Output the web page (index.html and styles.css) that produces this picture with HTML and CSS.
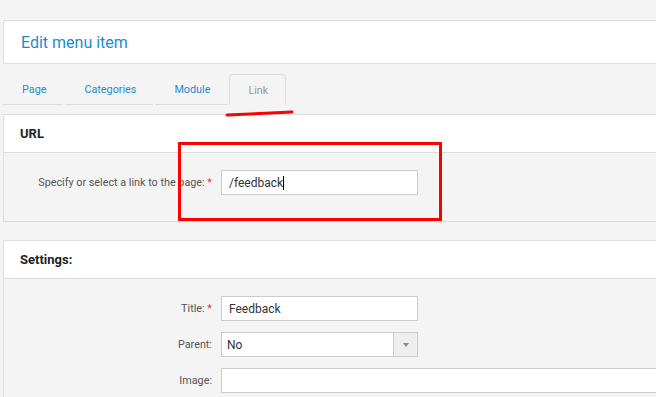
FILE: index.html
```html
<!DOCTYPE html>
<html lang="en">
<head>
    <meta charset="UTF-8">
    <title>Edit menu item</title>
    <link rel="stylesheet" href="styles.css">
</head>
<body>
    <div class="page">
        <div class="title-box">
            <h1>Edit menu item</h1>
        </div>

        <ul class="tabs">
            <li class="tab">Page</li>
            <li class="tab">Categories</li>
            <li class="tab">Module</li>
            <li class="tab tab-active">Link</li>
        </ul>

        <div class="panel">
            <div class="panel-head">URL</div>
            <div class="panel-body">
                <div class="field">
                    <label class="field-label">Specify or select a link to the page: <span class="req">*</span></label>
                    <div class="input">/feedback<span class="caret"></span></div>
                </div>
            </div>
        </div>

        <div class="panel">
            <div class="panel-head">Settings:</div>
            <div class="panel-body">
                <div class="field">
                    <label class="field-label">Title: <span class="req">*</span></label>
                    <div class="input">Feedback</div>
                </div>
                <div class="field">
                    <label class="field-label">Parent:</label>
                    <div class="input select">
                        <span class="select-value">No</span>
                        <span class="select-arrow"></span>
                    </div>
                </div>
                <div class="field">
                    <label class="field-label">Image:</label>
                    <div class="input input-wide"></div>
                </div>
            </div>
        </div>
    </div>

    <!-- red marks drawn over the screenshot -->
    <svg class="marks" width="656" height="397" viewBox="0 0 656 397">
        <path d="M227 115 L292 112" stroke="#ff0000" stroke-width="3" fill="none" stroke-linecap="round"/>
        <rect x="179.5" y="143.5" width="261" height="76" stroke="#ff0000" stroke-width="3" fill="none"/>
    </svg>
</body>
</html>
```

FILE: styles.css
```css
* {
    margin: 0;
    padding: 0;
    box-sizing: border-box;
}

html,
body {
    height: 100%;
}

body {
    background-color: #f4f4f4;
    font-family: Roboto, "Liberation Sans", sans-serif;
    color: #444;
    overflow: hidden;
    position: relative;
}

.page {
    padding: 20px 0 0 3px;
    margin-right: -40px;
}

.title-box {
    background-color: #fff;
    border: 1px solid #ddd;
    height: 44px;
    display: flex;
    align-items: center;
    padding-left: 17px;
}

.title-box h1 {
    font-size: 16px;
    font-weight: 400;
    color: #1a8dcd;
}

.tabs {
    list-style: none;
    display: flex;
    margin-top: 10px;
    height: 31px;
}

.tab {
    height: 31px;
    padding: 0 17px 0 19px;
    margin-right: 2px;
    display: flex;
    align-items: center;
    font-size: 10.8px;
    color: #1a8dcd;
    border-bottom: 1px solid #ddd;
}

.tab-active {
    color: #999;
    padding-left: 18px;
    border: 1px solid #ddd;
    border-bottom: none;
    border-radius: 4px 4px 0 0;
}

.panel {
    margin-top: 9px;
    border: 1px solid #ddd;
}

.panel + .panel {
    margin-top: 18px;
}

.panel-head {
    background-color: #fff;
    height: 38px;
    border-bottom: 1px solid #ddd;
    display: flex;
    align-items: center;
    padding-left: 16px;
    font-size: 13px;
    font-weight: 700;
    color: #222;
}

.panel-body {
    padding: 17px 0 15px;
}

.field {
    display: flex;
    align-items: center;
    margin-bottom: 11px;
}

.field-label {
    flex-shrink: 0;
    width: 208px;
    text-align: right;
    font-size: 10.8px;
    color: #555;
    margin-right: 9px;
}

.req {
    color: #e33;
}

.input {
    flex-shrink: 0;
    width: 197px;
    height: 25px;
    background-color: #fff;
    border: 1px solid #ccc;
    padding-left: 7px;
    display: flex;
    align-items: center;
    font-size: 12px;
    color: #333;
}

.input-wide {
    width: 520px;
}

.caret {
    width: 1px;
    height: 14px;
    background-color: #000;
}

.select {
    padding-left: 5px;
}

.select-value {
    flex: 1;
}

.select-arrow {
    width: 24px;
    height: 100%;
    background-color: #eee;
    border-left: 1px solid #ccc;
    display: flex;
    align-items: center;
    justify-content: center;
}

.select-arrow::after {
    content: "";
    border-left: 3.5px solid transparent;
    border-right: 3.5px solid transparent;
    border-top: 4px solid #888;
}

.marks {
    position: absolute;
    top: 0;
    left: 0;
    pointer-events: none;
}
```
